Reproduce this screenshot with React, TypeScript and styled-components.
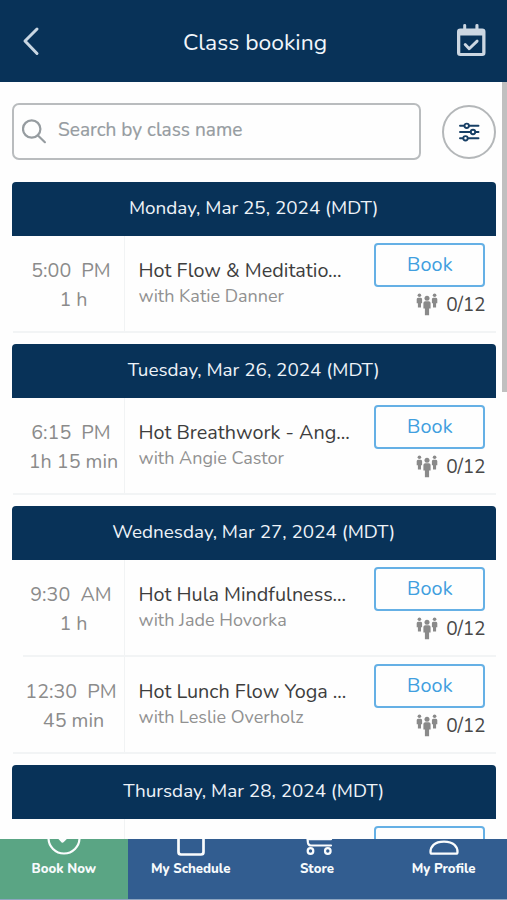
import React from 'react';
import styled, { createGlobalStyle } from 'styled-components';

const GlobalStyle = createGlobalStyle`
  * { box-sizing: border-box; }
  html, body { margin: 0; padding: 0; }
  body { font-family: Nunito, Lato, "Open Sans", sans-serif; background: #fefefe; overflow: hidden; }
  button { font-family: inherit; cursor: pointer; }
  svg { display: block; flex: none; }
`;

const navy = '#083258';
const blue = '#419fdf';

const Screen = styled.div`
  width: 507px;
  height: 900px;
  display: flex;
  flex-direction: column;
  overflow: hidden;
`;

const Header = styled.header`
  height: 82px;
  flex: none;
  display: flex;
  align-items: center;
  justify-content: space-between;
  padding: 0 20px 0 22px;
  background: ${navy};
`;

const Title = styled.h1`
  margin: 3px 0 0;
  color: #f1f6fb;
  font-size: 22.9px;
  line-height: 30px;
  font-weight: 400;
  white-space: nowrap;
`;

const IconButton = styled.button`
  display: flex;
  padding: 0;
  border: 0;
  background: none;
`;

const Main = styled.main`
  height: 756.5px;
  flex: none;
  display: flex;
  justify-content: space-between;
  overflow: hidden;
`;

const Content = styled.div`
  width: 496px;
  padding: 21.3px 0 0 11.5px;
`;

const ScrollThumb = styled.div`
  width: 5px;
  height: 310px;
  background: #c0c0c0;
`;

const SearchRow = styled.div`
  display: flex;
  align-items: center;
  justify-content: space-between;
  height: 57px;
  margin-bottom: 21.3px;
`;

const SearchBox = styled.label`
  display: flex;
  align-items: center;
  gap: 11px;
  width: 409px;
  height: 57px;
  padding: 0 8.500px;
  border: 2px solid #b9bcbe;
  border-radius: 7px;
`;

const Placeholder = styled.span`
  margin-top: -3px;
  color: #969ca1;
  font-size: 19.1px;
  line-height: 26px;
  -webkit-text-stroke: 0.2px #969ca1;
`;

const FilterButton = styled(IconButton)`
  width: 54px;
  height: 54px;
  align-items: center;
  justify-content: center;
  border: 2px solid #b4b7b9;
  border-radius: 50%;
`;

const Day = styled.section`
  margin-bottom: 11px;
`;

const DayTitle = styled.h2`
  height: 54px;
  margin: 0;
  padding-bottom: 1px;
  display: flex;
  align-items: center;
  justify-content: center;
  border-radius: 4px 4px 0 0;
  background: ${navy};
  color: #eef3f8;
  font-size: 18.9px;
  font-weight: 400;
  white-space: nowrap;
`;

const Row = styled.article<{ $inset: boolean }>`
  display: flex;
  height: 97px;
  margin-left: ${(p) => (p.$inset ? 11 : 1)}px;
  border-bottom: 2px solid #f2f4f5;
`;

const TimeCell = styled.div<{ $inset: boolean }>`
  width: ${(p) => (p.$inset ? 102 : 112)}px;
  padding: 20px 0 0 ${(p) => (p.$inset ? 1 : 11)}px;
  border-right: 1px solid #f1f3f4;
  display: flex;
  flex-direction: column;
  align-items: center;
`;

const TimeText = styled.span`
  color: #8b8b8b;
  font-size: 19.7px;
  line-height: 29px;
  white-space: pre;
`;

const Info = styled.div`
  flex: 1;
  padding: 22.5px 0 0 14px;
  display: flex;
  flex-direction: column;
`;

const ClassName = styled.span`
  color: #3d3d3d;
  font-size: 19.8px;
  line-height: 26px;
  white-space: nowrap;
`;

const Teacher = styled.span`
  color: #919191;
  font-size: 18px;
  line-height: 24px;
  white-space: nowrap;
`;

const Actions = styled.div`
  width: 122px;
  padding: 7.3px 10.700px 0 0;
  display: flex;
  flex-direction: column;
  align-items: flex-end;
`;

const BookButton = styled.button`
  width: 111px;
  height: 44px;
  flex: none;
  padding: 0;
  border: 2px solid #65b0e5;
  border-radius: 4px;
  background: #fefefe;
  color: ${blue};
  font-size: 19.8px;
  letter-spacing: 0.1px;
`;

const Capacity = styled.div`
  display: flex;
  align-items: center;
  gap: 8px;
  height: 36px;
  color: #484848;
  font-size: 19.2px;
  letter-spacing: -0.2px;
`;

const Nav = styled.nav`
  height: 61.5px;
  flex: none;
  display: grid;
  grid-template-columns: 127.7px 126px 126.6px 126.7px;
  background: #325d90;
  border-bottom: 1px solid #8ea5c0;
`;

const NavItem = styled.a<{ $active?: boolean }>`
  display: flex;
  flex-direction: column;
  align-items: center;
  background: ${(p) => (p.$active ? '#5aa584' : 'transparent')};
  color: #f6fafc;
  font-size: 13.2px;
  line-height: 20px;
  font-weight: 800;
  white-space: nowrap;
`;

const NavIcon = styled.svg`
  width: 36px;
  height: 20px;
  fill: none;
  stroke: #fafcfd;
  stroke-width: 2.2;
  stroke-linecap: round;
  stroke-linejoin: round;
`;

const PeopleIcon = () => (
  <svg width="22" height="23" viewBox="0 0 22 23" fill="#8a8a8a">
    <circle cx="3.400" cy="2.300" r="1.800" />
    <path d="M2 4.700h2.800q1.300 0 1.300 1.500v4H5v4.200H1.900v-4.200H.7v-4Q.7 4.700 2 4.700Z" />
    <circle cx="18.600" cy="2.300" r="1.800" />
    <path d="M17.200 4.700H20q1.300 0 1.300 1.500v4h-1.200v4.200H17v-4.200h-1.100v-4q0-1.500 1.300-1.500Z" />
    <circle cx="11" cy="5.300" r="2.500" />
    <path d="M9.300 8.200h3.400q1.900 0 1.900 1.900v5.500h-1.500v6.600H8.900v-6.600H7.400v-5.500q0-1.900 1.900-1.900Z" />
  </svg>
);

type Session = { time: string; length: string; name: string; teacher: string };
type DayData = { label: string; sessions: Session[] };

const days: DayData[] = [
  { label: 'Monday, Mar 25, 2024 (MDT)', sessions: [
    { time: '5:00  PM ', length: '1 h', name: 'Hot Flow & Meditatio...', teacher: 'with Katie Danner' },
  ] },
  { label: 'Tuesday, Mar 26, 2024 (MDT)', sessions: [
    { time: '6:15  PM ', length: '1h 15 min', name: 'Hot Breathwork - Ang...', teacher: 'with Angie Castor' },
  ] },
  { label: 'Wednesday, Mar 27, 2024 (MDT)', sessions: [
    { time: '9:30  AM ', length: '1 h', name: 'Hot Hula Mindfulness...', teacher: 'with Jade Hovorka' },
    { time: '12:30  PM ', length: '45 min', name: 'Hot Lunch Flow Yoga ...', teacher: 'with Leslie Overholz' },
  ] },
  { label: 'Thursday, Mar 28, 2024 (MDT)', sessions: [
    { time: '', length: '', name: '', teacher: '' },
  ] },
];

const SessionRow = ({ s, inset }: { s: Session; inset: boolean }) => (
  <Row $inset={inset}>
    <TimeCell $inset={inset}>
      <TimeText>{s.time}</TimeText>
      <TimeText>{s.length}</TimeText>
    </TimeCell>
    <Info>
      <ClassName>{s.name}</ClassName>
      <Teacher>{s.teacher}</Teacher>
    </Info>
    <Actions>
      <BookButton>{s.name ? 'Book' : ''}</BookButton>
      {s.name && <Capacity><PeopleIcon />0/12</Capacity>}
    </Actions>
  </Row>
);

export default function App() {
  return (
    <>
      <GlobalStyle />
      <Screen>
        <Header>
          <IconButton aria-label="Back">
            <svg width="32" height="30" viewBox="0 0 32 30" fill="none" stroke="#c9d6e2" strokeWidth="3" strokeLinecap="round" strokeLinejoin="round">
              <path d="M15 3 3 15 15 27.500" />
            </svg>
          </IconButton>
          <Title>Class booking</Title>
          <IconButton aria-label="Calendar">
            <svg width="31" height="34" viewBox="0 0 31 34">
              <path fill="#ccd7e2" fillRule="evenodd" d="M7.200 1.300Q7.200 0 8.700 0t1.500 1.300v3.200h9.200V1.300q0-1.300 1.600-1.300t1.500 1.300v3.200h3.700q3.300 0 3.300 3.300v21q0 3.300-3.300 3.300H4.300Q1 32.100 1 28.800v-21Q1 4.500 4.300 4.500h2.900ZM4.300 11.600v17.400h21.900V11.600Z" />
              <path d="m9.200 20.600 4 4.200 7.900-7.700" fill="none" stroke="#ccd7e2" strokeWidth="2.900" strokeLinecap="round" strokeLinejoin="round" />
            </svg>
          </IconButton>
        </Header>
        <Main>
          <Content>
            <SearchRow>
              <SearchBox>
                <svg width="25" height="25" viewBox="0 0 25 25" fill="none" stroke="#969ca0" strokeWidth="2.200" strokeLinecap="round">
                  <circle cx="9.700" cy="10" r="8.700" />
                  <path d="m16.200 16.700 6.700 6.500" />
                </svg>
                <Placeholder>Search by class name</Placeholder>
              </SearchBox>
              <FilterButton aria-label="Filters">
                <svg width="22" height="20" viewBox="0 0 22 20" fill="#fefefe" stroke="#173f65" strokeWidth="1.900" strokeLinecap="round">
                  <path d="M2 3.800h18.500M2 10h18.500M2 16.300h18.500" />
                  <circle cx="8.700" cy="3.800" r="2.200" />
                  <circle cx="15" cy="10" r="2.200" />
                  <circle cx="7.500" cy="16.300" r="2.200" />
                </svg>
              </FilterButton>
            </SearchRow>
            {days.map((d) => (
              <Day key={d.label}>
                <DayTitle>{d.label}</DayTitle>
                {d.sessions.map((s, i) => (
                  <SessionRow key={s.time} s={s} inset={i < d.sessions.length - 1} />
                ))}
              </Day>
            ))}
          </Content>
          <ScrollThumb />
        </Main>
        <Nav>
          <NavItem $active>
            <NavIcon viewBox="0 0 36 20"><circle cx="18" cy="-1" r="15.500" /><path d="m13.500-1 3 3.200 5-5" strokeWidth="3" /></NavIcon>
            Book Now
          </NavItem>
          <NavItem>
            <NavIcon viewBox="0 0 36 20"><path d="M5.500-5v18q0 2.500 2.500 2.500h20q2.500 0 2.500-2.500V-5" strokeWidth="2.700" /></NavIcon>
            My Schedule
          </NavItem>
          <NavItem>
            <NavIcon viewBox="0 0 36 20"><path d="M8-4 9 4Q9.500 6.500 12 6.500H32M9 .2H32" /><circle cx="11.500" cy="12" r="2.800" /><circle cx="28.800" cy="12" r="2.800" /></NavIcon>
            Store
          </NavItem>
          <NavItem>
            <NavIcon viewBox="0 0 36 20"><path d="M4.500 13q0-4.500 3-7.200 3.500-3.200 10.500-3.200t10.500 3.200q3 2.700 3 7.200 0 1.700-1.500 1.700H6q-1.500 0-1.500-1.700Z" strokeWidth="2.300" /></NavIcon>
            My Profile
          </NavItem>
        </Nav>
      </Screen>
    </>
  );
}
